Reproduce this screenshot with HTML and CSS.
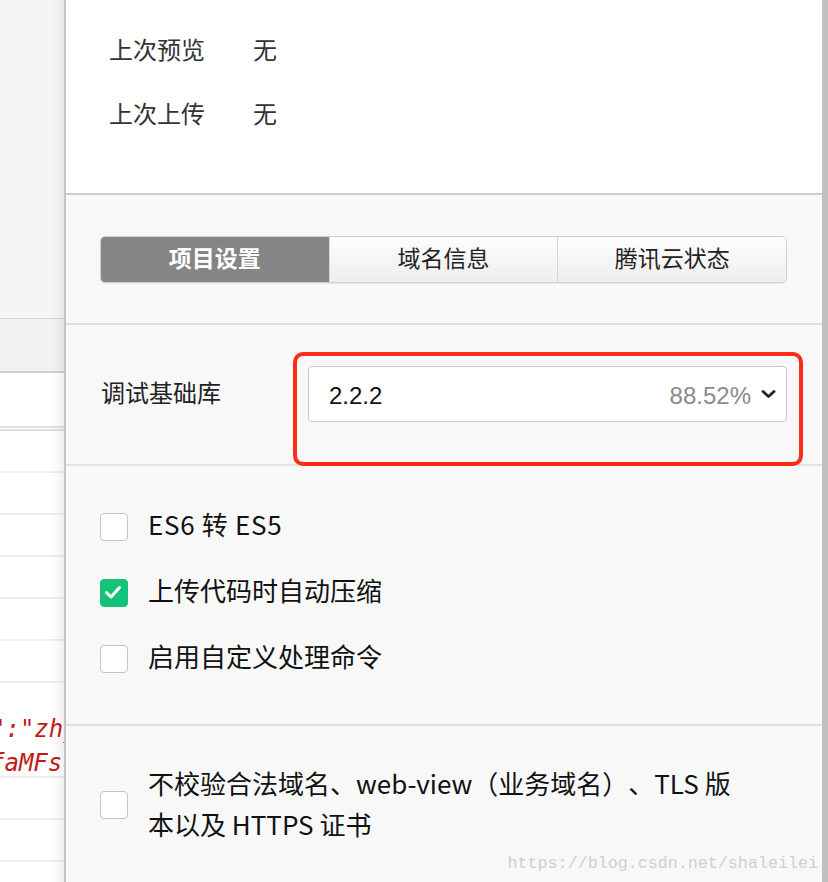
FILE: index.html
```html
<!DOCTYPE html>
<html>
<head>
    <title>项目详情</title>
    <link rel="stylesheet" href="styles.css">
</head>
<body>
    <div class="app">
        <div class="editor">
            <div class="editor-top"></div>
            <div class="editor-head"></div>
            <div class="row row-first"></div>
            <div class="row"></div>
            <div class="row"></div>
            <div class="row"></div>
            <div class="row"></div>
            <div class="row"></div>
            <div class="row"></div>
            <div class="row row-code">
                <div class="code">":"zh_CN",</div>
                <div class="code code-2">faMFsc</div>
            </div>
            <div class="row"></div>
            <div class="row"></div>
        </div>

        <div class="panel">
            <section class="info">
                <div class="info-row"><span class="info-key">上次预览</span><span>无</span></div>
                <div class="info-row"><span class="info-key">上次上传</span><span>无</span></div>
            </section>

            <section class="tabs-wrap">
                <div class="tabs">
                    <button class="tab active">项目设置</button>
                    <button class="tab">域名信息</button>
                    <button class="tab">腾讯云状态</button>
                </div>
            </section>

            <section class="lib">
                <span class="lib-label">调试基础库</span>
                <div class="select">
                    <span class="version">2.2.2</span>
                    <span class="rate">88.52%</span>
                    <svg class="chevron" width="15" height="10" viewBox="0 0 15 10">
                        <path d="M2 2.5 L7.5 7.5 L13 2.5" fill="none" stroke="#222" stroke-width="2.8" stroke-linecap="round" stroke-linejoin="round"/>
                    </svg>
                </div>
                <div class="mark"></div>
            </section>

            <section class="opts">
                <label class="opt"><span class="box"></span><span class="es">ES6 转 ES5</span></label>
                <label class="opt">
                    <span class="box on">
                        <svg width="26" height="26" viewBox="0 0 26 26">
                            <polyline points="6.5,13.5 11,18 19.5,8.5" fill="none" stroke="#fff" stroke-width="3" stroke-linecap="round" stroke-linejoin="round"/>
                        </svg>
                    </span>上传代码时自动压缩
                </label>
                <label class="opt"><span class="box"></span>启用自定义处理命令</label>
            </section>

            <section class="opts opts-last">
                <label class="opt opt-multi">
                    <span class="box"></span>
                    <span class="opt-text">不校验合法域名、web-view（业务域名）、TLS 版<br>本以及 HTTPS 证书</span>
                </label>
            </section>

            <div class="watermark">https://blog.csdn.net/shaleilei</div>
        </div>
    </div>
</body>
</html>
```

FILE: styles.css
```css
body {
    margin: 0;
    font-family: "Liberation Sans", "Noto Sans CJK SC", sans-serif;
    color: #222;
}
.app {
    display: flex;
    height: 882px;
    overflow: hidden;
}

/* left editor strip */
.editor {
    width: 64px;
    flex-shrink: 0;
    border-right: 2px solid #c6c6c6;
    background: #fff;
    overflow: hidden;
    position: relative;
}
.editor::after {
    content: "";
    position: absolute;
    top: 0;
    right: 0;
    bottom: 0;
    width: 12px;
    background: linear-gradient(to right, rgba(0,0,0,0), rgba(0,0,0,0.06));
}
.editor-top {
    height: 318px;
    background: #f4f6f6;
    border-bottom: 1px solid #d4d4d4;
}
.editor-head {
    height: 52px;
    background: #f2f2f2;
    border-bottom: 2px solid #d0d0d0;
}
.row {
    height: 40px;
    border-bottom: 2px solid #eeeeee;
}
.row-first {
    height: 53px;
    border-bottom: 5px double #e0e0e0;
}
.row-code {
    height: 95px;
    box-sizing: border-box;
    padding-top: 29px;
}
.code {
    font-family: "DejaVu Sans Mono", monospace;
    font-style: italic;
    font-size: 24px;
    line-height: 34px;
    color: #c41a16;
    white-space: nowrap;
    text-indent: -9px;
}
.code-2 {
    text-indent: -10px;
}

/* right settings panel */
.panel {
    flex: 1;
    display: flex;
    flex-direction: column;
    background: #f8f8f8;
    border-right: 6px solid #c0c0c0;
    position: relative;
}
.info {
    height: 177px;
    padding: 16px 43px 0;
    background: #fff;
    border-bottom: 2px solid #cccccc;
    font-size: 24px;
    color: #333;
}
.info-row {
    height: 64px;
    display: flex;
    align-items: center;
}
.info-key {
    width: 144px;
}

.tabs-wrap {
    padding: 41px 35px 40px 34px;
    border-bottom: 2px solid #dedede;
}
.tabs {
    display: flex;
    height: 47px;
    box-sizing: border-box;
    border: 1px solid #cfcfcf;
    border-radius: 5px;
    overflow: hidden;
    box-shadow: 0 1px 1px rgba(0,0,0,0.06);
}
.tab {
    flex: 1;
    font-family: inherit;
    font-size: 23px;
    color: #222;
    border: none;
    border-left: 1px solid #d6d6d6;
    background: linear-gradient(#fdfdfd, #eeeeee);
    padding: 0 0 5px;
}
.tab.active {
    background: #858585;
    color: #fff;
    font-weight: bold;
    border-left: none;
}

.lib {
    display: flex;
    align-items: center;
    padding: 41px 35px 42px;
    border-bottom: 2px solid #e3e3e3;
    position: relative;
    font-size: 24px;
}
.lib-label {
    width: 207px;
    padding-bottom: 6px;
}
.select {
    flex: 1;
    height: 56px;
    box-sizing: border-box;
    display: flex;
    align-items: center;
    padding: 3px 10px 0 20px;
    background: #fff;
    border: 1px solid #c9c9c9;
    border-radius: 4px;
}
.version {
    flex: 1;
    color: #111;
}
.rate {
    color: #8a8a8a;
    margin-right: 10px;
}
.chevron {
    margin-bottom: 3px;
}
.mark {
    position: absolute;
    left: 227px;
    top: 27px;
    width: 502px;
    height: 106px;
    border: 4px solid #ff2d16;
    border-radius: 10px;
}

.opts {
    padding: 27px 34px 33px;
    border-bottom: 2px solid #e0e0e0;
}
.opt {
    display: flex;
    align-items: center;
    height: 66px;
    box-sizing: border-box;
    padding-bottom: 6px;
    font-family: "Noto Sans CJK SC", sans-serif;
    font-size: 26px;
    color: #111;
    text-spacing-trim: space-all;
}
.es {
    letter-spacing: 0.7px;
}
.box {
    width: 26px;
    height: 26px;
    flex-shrink: 0;
    margin-right: 20px;
    margin-top: 8px;
    background: #fff;
    border: 1px solid #c4c4c4;
    border-radius: 4px;
}
.box.on {
    background: #15c27a;
    border-color: #15c27a;
}
.box svg {
    display: block;
    margin: -1px;
}
.opts-last {
    padding-top: 36px;
    border-bottom: none;
}
.opt-multi {
    height: auto;
    padding-bottom: 0;
    line-height: 41px;
}
.opt-multi .box {
    margin-top: 4px;
}
.watermark {
    position: absolute;
    right: 4px;
    bottom: 9px;
    font-family: "Liberation Mono", monospace;
    font-size: 16.7px;
    color: #cfcfcf;
}
```
